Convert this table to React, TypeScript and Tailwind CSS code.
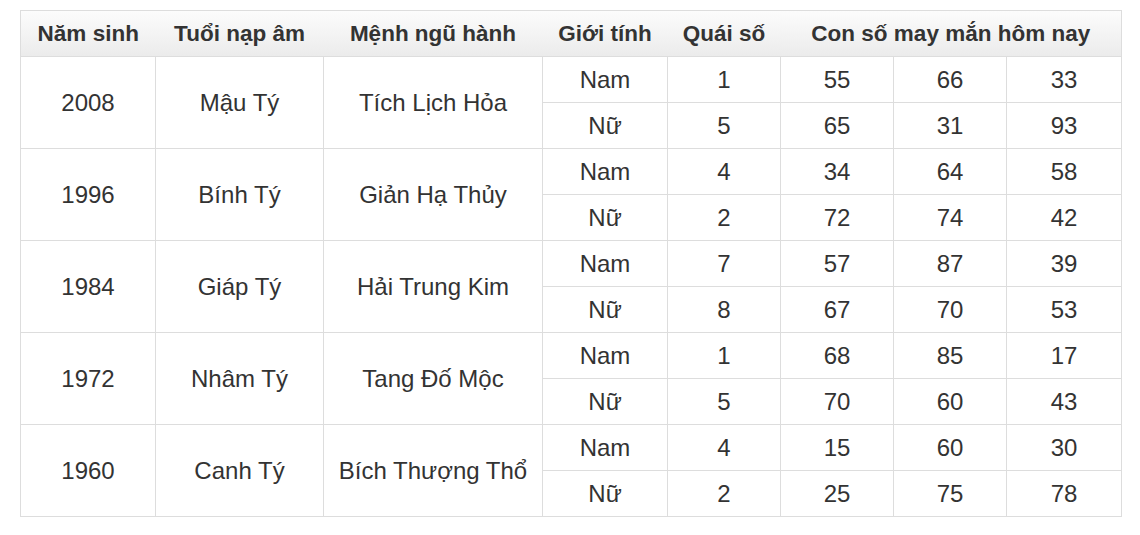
const rows = [
  { year: '2008', age: 'Mậu Tý', menh: 'Tích Lịch Hỏa', nam: ['1', '55', '66', '33'], nu: ['5', '65', '31', '93'] },
  { year: '1996', age: 'Bính Tý', menh: 'Giản Hạ Thủy', nam: ['4', '34', '64', '58'], nu: ['2', '72', '74', '42'] },
  { year: '1984', age: 'Giáp Tý', menh: 'Hải Trung Kim', nam: ['7', '57', '87', '39'], nu: ['8', '67', '70', '53'] },
  { year: '1972', age: 'Nhâm Tý', menh: 'Tang Đố Mộc', nam: ['1', '68', '85', '17'], nu: ['5', '70', '60', '43'] },
  { year: '1960', age: 'Canh Tý', menh: 'Bích Thượng Thổ', nam: ['4', '15', '60', '30'], nu: ['2', '25', '75', '78'] },
];

const td = 'border border-[#dddddd] h-[46px] p-0 text-center align-middle';
const th = 'h-[46px] border-b border-[#dddddd] p-0 text-center';

export default function App() {
  return (
    <div className="min-h-[535px] bg-white pl-5 pt-[10px] font-['Liberation_Sans',Arial,sans-serif] text-[#333333]">
      <table className="w-[1101px] table-fixed border-collapse border border-[#dddddd] text-[24px]">
        <colgroup>
          <col className="w-[135px]" />
          <col className="w-[168px]" />
          <col className="w-[219px]" />
          <col className="w-[125px]" />
          <col className="w-[113px]" />
          <col className="w-[113px]" />
          <col className="w-[113px]" />
          <col className="w-[115px]" />
        </colgroup>
        <thead>
          <tr className="bg-gradient-to-b from-[#fcfcfc] to-[#ebebeb] text-[22.5px] font-bold">
            <th className={th}>Năm sinh</th>
            <th className={th}>Tuổi nạp âm</th>
            <th className={th}>Mệnh ngũ hành</th>
            <th className={th}>Giới tính</th>
            <th className={th}>Quái số</th>
            <th colSpan={3} className={th}>
              Con số may mắn hôm nay
            </th>
          </tr>
        </thead>
        <tbody>
          {rows.map(r => (
            <>
              <tr key={r.year + 'a'}>
                <td rowSpan={2} className={td}>{r.year}</td>
                <td rowSpan={2} className={td}>{r.age}</td>
                <td rowSpan={2} className={td}>{r.menh}</td>
                <td className={td}>Nam</td>
                {r.nam.map((v, i) => (
                  <td key={i} className={td}>{v}</td>
                ))}
              </tr>
              <tr key={r.year + 'b'}>
                <td className={td}>Nữ</td>
                {r.nu.map((v, i) => (
                  <td key={i} className={td}>{v}</td>
                ))}
              </tr>
            </>
          ))}
        </tbody>
      </table>
    </div>
  );
}
